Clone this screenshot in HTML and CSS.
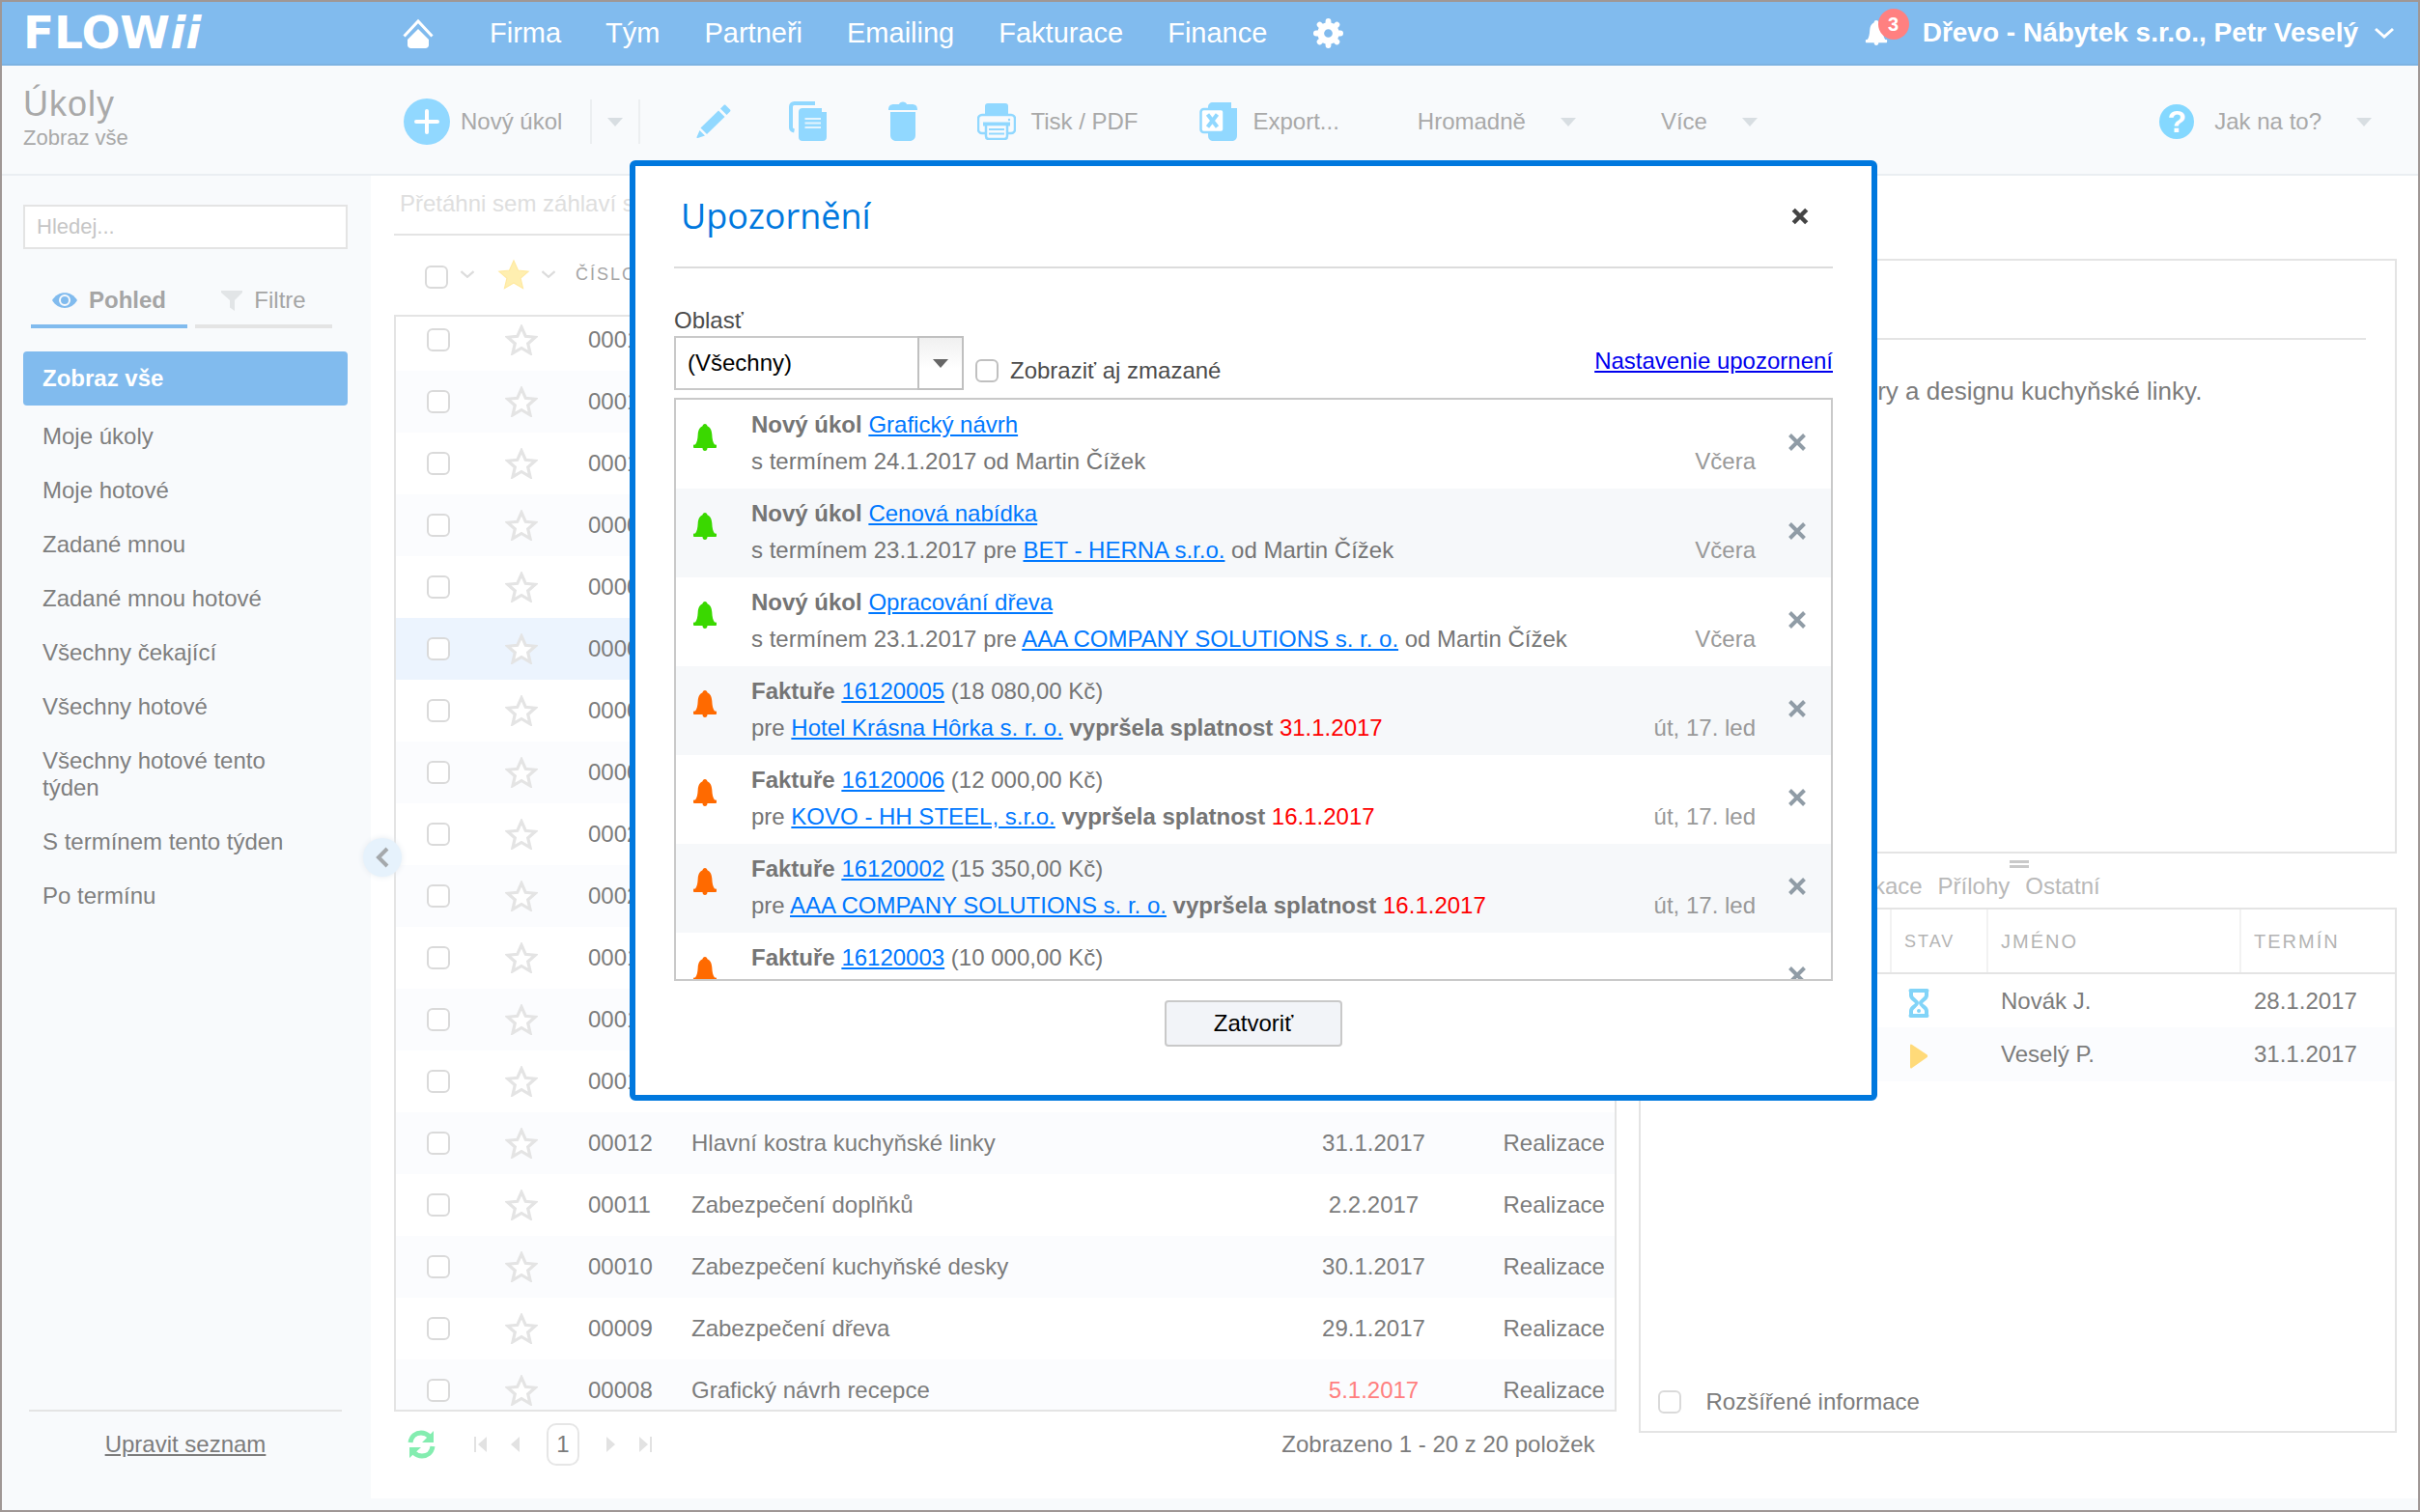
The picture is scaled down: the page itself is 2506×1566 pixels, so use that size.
FILE: index.html
```html
<!DOCTYPE html>
<html lang="cs">
<head>
    <meta charset="UTF-8">
    <meta name="viewport" content="width=device-width, initial-scale=1.0">
    <title>FLOWii - Úkoly</title>
    <link rel="stylesheet" href="styles.css">
</head>
<body>
    <!-- shared icons -->
    <svg class="sprite" aria-hidden="true">
        <symbol id="bell" viewBox="0 0 24 28">
            <path d="M12 0c1.5 0 2.3 1 2.5 2.3C18 4 19 7 19.300 11c.3 5 .9 8 2.700 10.500H23.200c.5 0 .8.300.8.800V24c0 .600-.300 1-.800 1H14.500c0 2-1 3-2.500 3s-2.500-1-2.500-3H.8c-.5 0-.8-.400-.8-1v-1.700c0-.5.300-.8.800-.8H2C3.800 19 4.400 16 4.700 11 5 7 6 4 9.500 2.300 9.700 1 10.500 0 12 0z"/>
        </symbol>
        <symbol id="star" viewBox="0 0 32 30">
            <path d="M16 2.500l4 9 9.500.900-7.200 6.300 2.200 9.300L16 23l-8.500 5 2.200-9.300L2.500 12.400l9.500-.900z"/>
        </symbol>
        <symbol id="cross" viewBox="0 0 20 20">
            <path d="M2.500 2.500l15 15M17.500 2.500l-15 15" fill="none" stroke="currentColor"/>
        </symbol>
        <symbol id="chevron" viewBox="0 0 22 12">
            <path d="M2 2l9 8 9-8" fill="none" stroke="currentColor" stroke-width="3"/>
        </symbol>
        <symbol id="caret" viewBox="0 0 16 9">
            <path d="M0 0h16L8 9z"/>
        </symbol>
    </svg>

    <div class="app">
        <header class="topbar">
            <a class="logo" href="#">FLOW<i>ii</i></a>
            <nav class="nav">
                <a href="#" aria-label="Domů">
                    <svg width="32" height="31" viewBox="0 0 32 31" fill="#fff"><path d="M1.500 18.500L16 3l14.500 15.500" fill="none" stroke="#fff" stroke-width="3"/><path d="M16 11L27 22v5.500c0 2-1.500 3.500-3.500 3.500h-15C6.500 31 5 29.500 5 27.500V22z"/></svg>
                </a>
                <a href="#">Firma</a>
                <a href="#">Tým</a>
                <a href="#">Partneři</a>
                <a href="#">Emailing</a>
                <a href="#">Fakturace</a>
                <a href="#">Finance</a>
                <a href="#" aria-label="Nastavení">
                    <svg width="31" height="31" viewBox="-16 -16 32 32">
                        <circle r="8" fill="none" stroke="#fff" stroke-width="7"/>
                        <path d="M0-9.500V-13M0 9.500V13M9.500 0H13M-9.500 0H-13M7-7l2.200-2.200M-7-7l-2.200-2.200M7 7l2.200 2.200M-7 7l-2.200 2.200" stroke="#fff" stroke-width="6" stroke-linecap="round"/>
                    </svg>
                </a>
            </nav>
            <div class="account">
                <button class="alerts" aria-label="Upozornění">
                    <svg width="24" height="26" fill="#fff"><use href="#bell"/></svg>
                    <span class="badge">3</span>
                </button>
                <button class="user">Dřevo - Nábytek s.r.o., Petr Veselý
                    <svg width="22" height="12"><use href="#chevron"/></svg>
                </button>
            </div>
        </header>

        <div class="toolbar">
            <div class="heading">
                <h1>Úkoly</h1>
                <p>Zobraz vše</p>
            </div>
            <div class="tools">
                <button class="tool new">
                    <svg width="48" height="48" viewBox="0 0 48 48"><circle cx="24" cy="24" r="24" fill="#91d8ff"/><path d="M24 13v22M13 24h22" stroke="#fff" stroke-width="4" stroke-linecap="round"/></svg>
                    Nový úkol
                </button>
                <button class="tool split" aria-label="Další možnosti"><svg class="caret" width="16" height="9"><use href="#caret"/></svg></button>
                <button class="tool edit" aria-label="Upravit">
                    <svg width="36" height="36" viewBox="0 0 36 36" fill="#91d8ff"><path d="M23 6.500l6.500 6.500L11 31l-6.500-6.500z"/><path d="M25 4.500l3.500-3.500c.6-.6 1.400-.6 2 0l4.500 4.500c.6.6.6 1.400 0 2L31.500 11z"/><path d="M3.500 27l5.500 5.500L1.500 35c-.6.200-1.200-.4-1-1z"/></svg>
                </button>
                <button class="tool copy" aria-label="Kopírovat">
                    <svg width="40" height="42" viewBox="0 0 40 42"><path d="M27 2H5.500C3.500 2 2 3.500 2 5.500V27c0 2 1 3 3.500 3.500" fill="none" stroke="#91d8ff" stroke-width="4"/><path d="M14 7h20v4h5v26c0 2.500-1.500 4-4 4H14c-2.500 0-4-1.500-4-4V11c0-2.500 1.500-4 4-4z" fill="#91d8ff"/><path d="M16.500 18H33M16.500 22.500H33M16.500 27H33" stroke="#e4f4fd" stroke-width="2"/></svg>
                </button>
                <button class="tool trash" aria-label="Smazat">
                    <svg width="32" height="42" viewBox="0 0 32 42" fill="#91d8ff"><path d="M1 9c0-4 1.500-6 6-6h5c.5-3.500 7.500-3.500 8 0h5c4.500 0 6 2 6 6z"/><path d="M3 11h26v24c0 3.500-2.500 6-6 6H9c-3.500 0-6-2.500-6-6z"/></svg>
                </button>
                <button class="tool print">
                    <svg width="40" height="38" viewBox="0 0 40 38"><path d="M8 11V3c0-2 1-3 3-3h18c2 0 3 1 3 3v8z" fill="#91d8ff"/><rect x="1" y="12" width="38" height="19" rx="4" fill="#f8fafc" stroke="#91d8ff" stroke-width="2.500"/><path d="M6 21.500h28" stroke="#91d8ff" stroke-width="4"/><circle cx="33" cy="17" r="1.200" fill="#91d8ff"/><path d="M9 22h22v12c0 2-1 3-3 3H12c-2 0-3-1-3-3z" fill="#f8fafc" stroke="#91d8ff" stroke-width="2.500"/><path d="M12 27h16M12 31.500h16" stroke="#91d8ff" stroke-width="2"/></svg>
                    Tisk / PDF
                </button>
                <button class="tool export">
                    <svg width="40" height="42" viewBox="0 0 40 42"><path d="M14 1h19v6h6v28c0 4-2 6-6 6H15c-4 0-6-2-6-6V6c0-3 2-5 5-5z" fill="#91d8ff"/><rect x="1.500" y="8" width="24" height="24" rx="3" fill="#fff" stroke="#91d8ff" stroke-width="2.500"/><path d="M8.500 13.500l10 13M18.500 13.500l-10 13" stroke="#91d8ff" stroke-width="4"/></svg>
                    Export...
                </button>
                <button class="tool bulk">Hromadně <svg class="caret" width="16" height="9"><use href="#caret"/></svg></button>
                <button class="tool more">Více <svg class="caret" width="16" height="9"><use href="#caret"/></svg></button>
                <button class="tool help"><span class="question">?</span>Jak na to? <svg class="caret" width="16" height="9"><use href="#caret"/></svg></button>
            </div>
        </div>

        <div class="main">
            <aside class="sidebar">
                <input class="search" type="text" placeholder="Hledej..." aria-label="Hledej">
                <div class="side-tabs">
                    <button class="side-tab active">
                        <svg width="26" height="16" viewBox="0 0 26 16"><path d="M0 8C6-2.500 20-2.500 26 8 20 18.500 6 18.500 0 8z" fill="#81bbee"/><circle cx="13" cy="8" r="5" fill="none" stroke="#f8fafc" stroke-width="2"/></svg>
                        Pohled
                    </button>
                    <button class="side-tab">
                        <svg width="22" height="21" viewBox="0 0 22 21" fill="#e2e5e7"><path d="M0 0h22v2l-8 8v11l-5-3.500V10L0 2z"/></svg>
                        Filtre
                    </button>
                </div>
                <nav class="views">
                    <a class="active" href="#">Zobraz vše</a>
                    <a href="#">Moje úkoly</a>
                    <a href="#">Moje hotové</a>
                    <a href="#">Zadané mnou</a>
                    <a href="#">Zadané mnou hotové</a>
                    <a href="#">Všechny čekající</a>
                    <a href="#">Všechny hotové</a>
                    <a href="#">Všechny hotové tento týden</a>
                    <a href="#">S termínem tento týden</a>
                    <a href="#">Po termínu</a>
                </nav>
                <div class="side-footer"><a href="#">Upravit seznam</a></div>
                <button class="collapse" aria-label="Skrýt panel">
                    <svg width="14" height="22" viewBox="0 0 14 22"><path d="M12 2L3 11l9 9" fill="none" stroke="#a5a9ac" stroke-width="4"/></svg>
                </button>
            </aside>

            <section class="content">
                <div class="list">
                    <div class="group-hint">Přetáhni sem záhlaví sloupce</div>
                    <div class="list-head">
                        <input type="checkbox" aria-label="Vybrat vše">
                        <svg class="sort" width="16" height="10"><use href="#chevron"/></svg>
                        <svg class="fav" width="36" height="34"><use href="#star"/></svg>
                        <svg class="sort" width="16" height="10"><use href="#chevron"/></svg>
                        <span>ČÍSLO</span>
                    </div>
                    <div class="list-body">
                        <table class="tasks">
                            <colgroup><col class="c-check"><col class="c-star"><col class="c-number"><col><col class="c-date"><col class="c-phase"></colgroup>
                            <tbody id="tasks"></tbody>
                        </table>
                    </div>
                    <div class="pager">
                        <button aria-label="Obnovit">
                            <svg width="29" height="30" viewBox="0 0 29 30"><path d="M3 13C4 6 9 3 14 3c4 0 7 2 9 4M26 17c-1 7-6 10-11 10-4 0-7-2-9-4" fill="none" stroke="#84edb0" stroke-width="5"/><path d="M27 1v12H15zM2 29V18h12z" fill="#84edb0"/></svg>
                        </button>
                        <button class="first" aria-label="První"><svg width="14" height="16" viewBox="0 0 14 16"><path d="M0 0h2v16H0zM13 0v16L4 8z"/></svg></button>
                        <button class="prev" aria-label="Předchozí"><svg width="10" height="16" viewBox="0 0 10 16"><path d="M9 0v16L0 8z"/></svg></button>
                        <button class="page">1</button>
                        <button class="next" aria-label="Další"><svg width="10" height="16" viewBox="0 0 10 16"><path d="M1 0v16l9-8z"/></svg></button>
                        <button class="last" aria-label="Poslední"><svg width="14" height="16" viewBox="0 0 14 16"><path d="M12 0h2v16h-2zM1 0v16l9-8z"/></svg></button>
                        <span class="total">Zobrazeno 1 - 20 z 20 položek</span>
                    </div>
                </div>

                <div class="detail">
                    <div class="description">
                        <hr>
                        <p>Specifikovat rozměry a designu kuchyňské linky.</p>
                    </div>
                    <div class="detail-tabs">
                        <span class="grip"></span>
                        <button>Komunikace</button>
                        <button>Přílohy</button>
                        <button>Ostatní</button>
                    </div>
                    <div class="people">
                        <table>
                            <thead>
                                <tr><th class="p-role"></th><th class="p-state">STAV</th><th class="p-name">JMÉNO</th><th class="p-date">TERMÍN</th></tr>
                            </thead>
                            <tbody>
                                <tr>
                                    <td></td>
                                    <td class="state"><svg width="22" height="30" viewBox="0 0 22 30"><path d="M2.500 2h17M2.500 28h17" stroke="#82d4f8" stroke-width="4" stroke-linecap="round"/><path d="M3 3v4c0 4 6 5 6 8s-6 4-6 8v4M19 3v4c0 4-6 5-6 8s6 4 6 8v4" fill="none" stroke="#82d4f8" stroke-width="4"/><circle cx="11" cy="23" r="2" fill="#82d4f8"/></svg></td>
                                    <td>Novák J.</td>
                                    <td>28.1.2017</td>
                                </tr>
                                <tr>
                                    <td></td>
                                    <td class="state"><svg width="22" height="26" viewBox="0 0 22 26"><path d="M2 2c0-1.500 1-2 2-1l15 10c1.500 1 1.500 2.500 0 3.500L4 25c-1 1-2 .5-2-1z" fill="#ffda79"/></svg></td>
                                    <td>Veselý P.</td>
                                    <td>31.1.2017</td>
                                </tr>
                            </tbody>
                        </table>
                        <label class="extended"><input type="checkbox"> Rozšířené informace</label>
                    </div>
                </div>
            </section>
        </div>
        <div class="strip"></div>
    </div>

    <div class="modal" role="dialog" aria-labelledby="modal-title">
        <div class="modal-head">
            <h2 id="modal-title">Upozornění</h2>
            <button class="close" aria-label="Zavřít"><svg width="18" height="18" stroke-width="5"><use href="#cross"/></svg></button>
        </div>
        <div class="filter">
            <div>
                <label class="area-label" for="area">Oblasť</label>
                <div class="select">
                    <select id="area"><option>(Všechny)</option></select>
                    <span class="arrow"><svg width="16" height="9"><use href="#caret"/></svg></span>
                </div>
            </div>
            <label class="deleted"><input type="checkbox"> Zobraziť aj zmazané</label>
            <a class="settings" href="#">Nastavenie upozornení</a>
        </div>
        <ul class="notices" id="notices"></ul>
        <div class="modal-foot"><button class="btn">Zatvoriť</button></div>
    </div>

    <script>
        // číslo, název, termín, po termínu
        const tasks = [
            ['00018'], ['00017'], ['00016'], ['00007'], ['00006'], ['00005'], ['00004'],
            ['00003'], ['00020'], ['00021'], ['00015'], ['00014'], ['00013'],
            ['00012', 'Hlavní kostra kuchyňské linky', '31.1.2017'],
            ['00011', 'Zabezpečení doplňků', '2.2.2017'],
            ['00010', 'Zabezpečení kuchyňské desky', '30.1.2017'],
            ['00009', 'Zabezpečení dřeva', '29.1.2017'],
            ['00008', 'Grafický návrh recepce', '5.1.2017', true]
        ];

        document.getElementById('tasks').innerHTML = tasks.map(([num, name, date, late], i) => `
            <tr class="${i === 5 ? 'selected' : ''}">
                <td><input type="checkbox" aria-label="Vybrat ${num}"></td>
                <td><svg class="star" width="34" height="32"><use href="#star"/></svg></td>
                <td>${num}</td>
                <td>${name || ''}</td>
                <td class="date ${late ? 'late' : ''}">${date || ''}</td>
                <td>${name ? 'Realizace' : ''}</td>
            </tr>`).join('');

        const notices = [
            ['task', '<b>Nový úkol</b> <a href="#">Grafický návrh</a>', 's termínem 24.1.2017 od Martin Čížek', 'Včera'],
            ['task', '<b>Nový úkol</b> <a href="#">Cenová nabídka</a>', 's termínem 23.1.2017 pre <a href="#">BET - HERNA s.r.o.</a> od Martin Čížek', 'Včera'],
            ['task', '<b>Nový úkol</b> <a href="#">Opracování dřeva</a>', 's termínem 23.1.2017 pre <a href="#">AAA COMPANY SOLUTIONS s. r. o.</a> od Martin Čížek', 'Včera'],
            ['invoice', '<b>Faktuře</b> <a href="#">16120005</a> (18 080,00 Kč)', 'pre <a href="#">Hotel Krásna Hôrka s. r. o.</a> <b>vypršela splatnost</b> <em>31.1.2017</em>', 'út, 17. led'],
            ['invoice', '<b>Faktuře</b> <a href="#">16120006</a> (12 000,00 Kč)', 'pre <a href="#">KOVO - HH STEEL, s.r.o.</a> <b>vypršela splatnost</b> <em>16.1.2017</em>', 'út, 17. led'],
            ['invoice', '<b>Faktuře</b> <a href="#">16120002</a> (15 350,00 Kč)', 'pre <a href="#">AAA COMPANY SOLUTIONS s. r. o.</a> <b>vypršela splatnost</b> <em>16.1.2017</em>', 'út, 17. led'],
            ['invoice', '<b>Faktuře</b> <a href="#">16120003</a> (10 000,00 Kč)', '', '']
        ];

        document.getElementById('notices').innerHTML = notices.map(([type, title, text, when]) => `
            <li class="notice ${type}">
                <svg class="notice-bell" width="24" height="28"><use href="#bell"/></svg>
                <div class="notice-text"><div>${title}</div><div>${text}</div></div>
                <span class="when">${when}</span>
                <button class="dismiss" aria-label="Odstranit"><svg width="20" height="20" stroke-width="4"><use href="#cross"/></svg></button>
            </li>`).join('');
    </script>
</body>
</html>
```
FILE: styles.css
```css
* {
    box-sizing: border-box;
}
body {
    margin: 0;
    font-family: "Liberation Sans", Arial, sans-serif;
    font-size: 24px;
    line-height: 28px;
    color: #7c7c7c;
    background: #fff;
}
h1, h2, p, ul {
    margin: 0;
    padding: 0;
    font-weight: normal;
}
button {
    padding: 0;
    border: 0;
    background: none;
    font: inherit;
    color: inherit;
    cursor: pointer;
    display: flex;
    align-items: center;
}
svg {
    display: block;
    flex: none;
}
input[type="checkbox"] {
    appearance: none;
    flex: none;
    display: block;
    width: 24px;
    height: 24px;
    margin: 0;
    border: 2px solid #dadada;
    border-radius: 6px;
    background: #fff;
}
.sprite {
    position: absolute;
    width: 0;
    height: 0;
}
.app {
    display: flex;
    flex-direction: column;
    height: 100vh;
    border: 2px solid #9f9795;
    overflow: hidden;
}

/* top bar */
.topbar {
    display: flex;
    align-items: center;
    flex: none;
    height: 66px;
    padding: 0 24px 0 22px;
    background: #81bbee;
    border-bottom: 2px solid #7db3e2;
    color: #fff;
    font-size: 28px;
}
.topbar a {
    color: #fff;
    text-decoration: none;
}
.logo {
    flex: none;
    width: 393px;
    font-family: "DejaVu Sans", sans-serif;
    font-weight: bold;
    font-size: 47px;
    line-height: 60px;
}
.nav {
    display: flex;
    align-items: center;
    gap: 46px;
    font-size: 29px;
}
.nav a:first-child {
    margin-right: 12px;
}
.nav a:last-child {
    margin-left: 2px;
}
.account {
    display: flex;
    align-items: center;
    gap: 36px;
    margin-left: auto;
}
.alerts {
    position: relative;
}
.badge {
    position: absolute;
    left: 14px;
    bottom: 6px;
    width: 32px;
    height: 32px;
    border-radius: 50%;
    background: #ff8080;
    font-size: 20px;
    font-weight: bold;
    line-height: 32px;
    text-align: center;
}
.user {
    gap: 16px;
    font-weight: bold;
}

/* toolbar */
.toolbar {
    display: flex;
    flex: none;
    height: 114px;
    background: #f8fafc;
    border-bottom: 2px solid #eaeef2;
    color: #a9a9a9;
}
.heading {
    flex: none;
    width: 416px;
    padding: 18px 22px;
}
.heading h1 {
    font-size: 36px;
    line-height: 44px;
    letter-spacing: 1px;
}
.heading p {
    font-size: 22px;
    line-height: 26px;
}
.tools {
    display: flex;
    flex: 1;
    align-items: center;
    padding: 4px 48px 0 0;
}
.new {
    gap: 11px;
}
.caret {
    fill: #d8dee2;
}
.split {
    justify-content: center;
    height: 46px;
    width: 52px;
    margin-left: 29px;
    border: solid #eceff1;
    border-width: 0 2px;
}
.edit {
    margin-left: 58px;
}
.copy {
    margin-left: 60px;
}
.trash {
    margin-left: 62px;
}
.print {
    margin-left: 61px;
    gap: 15px;
}
.export {
    margin-left: 64px;
    gap: 15px;
}
.bulk {
    margin-left: 81px;
    gap: 36px;
}
.more {
    margin-left: 88px;
    gap: 36px;
}
.help {
    margin-left: auto;
    gap: 36px;
}
.question {
    width: 36px;
    height: 36px;
    margin-right: -15px;
    border-radius: 50%;
    background: #84d8ff;
    color: #fff;
    font-size: 32px;
    font-weight: bold;
    line-height: 36px;
    text-align: center;
}

/* sidebar */
.main {
    display: flex;
    flex: 1;
    min-height: 0;
}
.strip {
    flex: none;
    height: 12px;
    background: #f8fafc;
}
.sidebar {
    position: relative;
    display: flex;
    flex: none;
    flex-direction: column;
    width: 382px;
    padding: 30px 24px 0 22px;
    background: #f8fafc;
}
.search {
    width: 100%;
    height: 46px;
    padding: 0 12px;
    border: 2px solid #e4e4e4;
    background: #fff;
    font: inherit;
    font-size: 22px;
}
.search::placeholder {
    color: #c6c6c6;
    opacity: 1;
}
.side-tabs {
    display: flex;
    gap: 8px;
    margin: 26px 16px 24px 8px;
}
.side-tab {
    justify-content: center;
    flex: 142;
    height: 56px;
    gap: 12px;
    padding-top: 2px;
    border-bottom: 4px solid #e4e4e4;
    color: #a5a5a5;
}
.side-tab.active {
    flex: 162;
    border-color: #81bbee;
    font-weight: bold;
}
.views a {
    display: block;
    padding: 14px 50px 14px 20px;
    color: #7f7f7f;
    text-decoration: none;
}
.views a.active {
    margin-bottom: 4px;
    border-radius: 4px;
    background: #81bbee;
    color: #fff;
    font-weight: bold;
}
.side-footer {
    margin: auto 6px 0;
    height: 92px;
    padding-top: 20px;
    border-top: 2px solid #e4e4e4;
    text-align: center;
}
.side-footer a {
    color: #7c7c7c;
}
.collapse {
    position: absolute;
    right: -32px;
    top: 686px;
    justify-content: center;
    width: 40px;
    height: 40px;
    border-radius: 50%;
    background: #e6f2fc;
    box-shadow: 0 0 6px #e4eaf0;
}

/* task list */
.content {
    display: grid;
    grid-template-columns: minmax(0, 29fr) minmax(0, 18fr);
    gap: 23px;
    flex: 1;
    min-width: 0;
    padding: 0 22px 0 24px;
}
.list {
    display: flex;
    flex-direction: column;
    min-height: 0;
}
.group-hint {
    flex: none;
    height: 62px;
    padding: 15px 6px;
    border-bottom: 2px solid #e4e4e4;
    color: #dedede;
}
.list-head {
    display: flex;
    align-items: center;
    flex: none;
    height: 82px;
    padding: 4px 32px 6px;
    color: #a5a5a5;
    font-size: 18px;
    letter-spacing: 2px;
}
.list-head input[type="checkbox"] {
    margin-top: 6px;
}
.list-head .sort {
    margin-left: 12px;
    color: #dcdcdc;
}
.list-head .fav {
    margin-left: 22px;
    fill: #ffefb0;
    stroke: #ffe9a0;
}
.list-head span {
    margin-left: 20px;
}
.list-head .fav + .sort {
    margin-left: 10px;
}
.list-body {
    flex: 1;
    min-height: 0;
    overflow: hidden;
    border: 2px solid #e4e4e4;
}
table {
    width: 100%;
    border-collapse: collapse;
    table-layout: fixed;
}
/* list is scrolled a little, the first row is cut */
.tasks {
    margin-top: -8px;
}
.tasks td {
    height: 64px;
    padding: 0;
}
.tasks tr:nth-child(even) {
    background: #fbfcfe;
}
.tasks tr.selected {
    background: #ecf4fe;
}
.tasks td:first-child {
    padding-left: 32px;
}
.c-check {
    width: 113px;
}
.c-star {
    width: 86px;
}
.c-number {
    width: 107px;
}
.c-date {
    width: 268px;
}
.c-phase {
    width: 115px;
}
.tasks .date {
    text-align: center;
}
.tasks .late {
    color: #ff7f7f;
}
.star {
    fill: #fff;
    stroke: #e4e4e4;
    stroke-width: 3;
}
.pager {
    display: flex;
    align-items: center;
    flex: none;
    height: 90px;
    padding: 0 22px 22px 14px;
    fill: #e2e2e2;
}
.first {
    margin-left: 40px;
}
.prev {
    margin-left: 24px;
}
.page {
    justify-content: center;
    width: 34px;
    height: 44px;
    margin: 0 27px;
    border: 2px solid #e6e6e6;
    border-radius: 10px;
}
.last {
    margin-left: 24px;
}
.total {
    margin-left: auto;
}

/* detail */
.detail {
    display: grid;
    grid-template-rows: minmax(0, 17fr) 56px minmax(0, 15fr);
    min-height: 0;
    padding: 86px 0 68px;
}
.description {
    padding: 80px 30px 0 26px;
    border: 2px solid #e4e4e4;
    font-size: 26px;
}
.description hr {
    margin: 0 0 39px;
    border: 0;
    border-top: 2px solid #e4e4e4;
}
.detail-tabs {
    position: relative;
    display: flex;
    gap: 16px;
    padding: 14px 0 0 162px;
    color: #b9b9b9;
}
.grip {
    position: absolute;
    left: 49%;
    top: 7px;
    width: 20px;
    height: 8px;
    border: solid #c9c9c9;
    border-width: 3px 0;
}
.detail-tabs button {
    height: 40px;
}
.people {
    display: flex;
    flex-direction: column;
    border: 2px solid #e4e4e4;
}
.people th {
    height: 66px;
    padding: 0 13px;
    border-bottom: 2px solid #e4e4e4;
    border-left: 2px solid #f2f2f2;
    color: #b4b4b4;
    font-size: 20px;
    font-weight: normal;
    letter-spacing: 2px;
    text-align: left;
}
.people th:first-child {
    border-left: 0;
}
.people .p-state {
    width: 100px;
    font-size: 18px;
}
.people .p-name {
    width: 262px;
}
.people .p-date {
    width: 160px;
}
.people td {
    height: 56px;
    padding: 0 14px;
}
.people .state {
    padding: 4px 18px 0;
}
.people tbody tr:nth-child(even) {
    background: #fbfcfe;
}
.extended {
    display: flex;
    align-items: center;
    gap: 26px;
    margin: auto 18px 16px;
}

/* notification dialog */
.modal {
    position: absolute;
    top: 166px;
    left: 652px;
    right: 562px;
    padding: 0 40px 50px;
    border: 6px solid #0078de;
    border-radius: 6px;
    background: #fff;
}
.modal-head {
    display: flex;
    align-items: center;
    justify-content: space-between;
    height: 106px;
    padding: 0 25px 0 7px;
    border-bottom: 2px solid #dcdcdc;
}
.modal-head h2 {
    font-family: "Open Sans", "Noto Sans", sans-serif;
    font-size: 36px;
    line-height: 44px;
    color: #0078de;
}
.close {
    color: #444;
}
.filter {
    display: flex;
    align-items: flex-end;
    padding-top: 40px;
    color: #4c4c4c;
}
.area-label {
    display: block;
    margin-bottom: 2px;
}
.select {
    position: relative;
    width: 300px;
}
.select select {
    display: block;
    appearance: none;
    width: 100%;
    height: 56px;
    padding: 0 60px 0 12px;
    border: 2px solid #c9c9c9;
    border-radius: 0;
    background: #fff;
    font: inherit;
    color: #000;
}
.arrow {
    position: absolute;
    top: 0;
    right: 0;
    display: flex;
    align-items: center;
    justify-content: center;
    width: 48px;
    height: 56px;
    border: 2px solid #c0c0c0;
    background: linear-gradient(#f0f0f0, #fff 60%);
    fill: #666;
    pointer-events: none;
}
.deleted {
    display: flex;
    align-items: center;
    gap: 12px;
    margin: 0 0 6px 12px;
}
.deleted input[type="checkbox"] {
    border-color: #c0c0c0;
}
.settings {
    margin: 0 0 16px auto;
    color: #00e;
}
.notices {
    height: 604px;
    margin-top: 8px;
    overflow: hidden;
    border: 2px solid #c9c9c9;
    list-style: none;
}
.notice {
    display: flex;
    height: 92px;
    padding: 7px 25px 0 18px;
    line-height: 38px;
    color: #757575;
}
.notice:nth-child(even) {
    background: #f6f8fa;
}
.notice a {
    color: #0078ff;
}
.notice em {
    font-style: normal;
    color: #f00;
}
.notice-bell {
    margin-top: 18px;
    fill: #3ad800;
}
.invoice .notice-bell {
    fill: #ff6a00;
}
.notice-text {
    flex: 1;
    margin-left: 36px;
}
.when {
    margin-top: 38px;
    color: #999;
}
.dismiss {
    align-items: flex-start;
    margin-left: 33px;
    padding-top: 27px;
    color: #909ca6;
}
.modal-foot {
    display: flex;
    justify-content: center;
    padding-top: 20px;
}
.btn {
    justify-content: center;
    width: 184px;
    height: 48px;
    border: 2px solid #c9c9c9;
    border-radius: 4px;
    background: #f2f4f8;
    color: #000;
}
```
